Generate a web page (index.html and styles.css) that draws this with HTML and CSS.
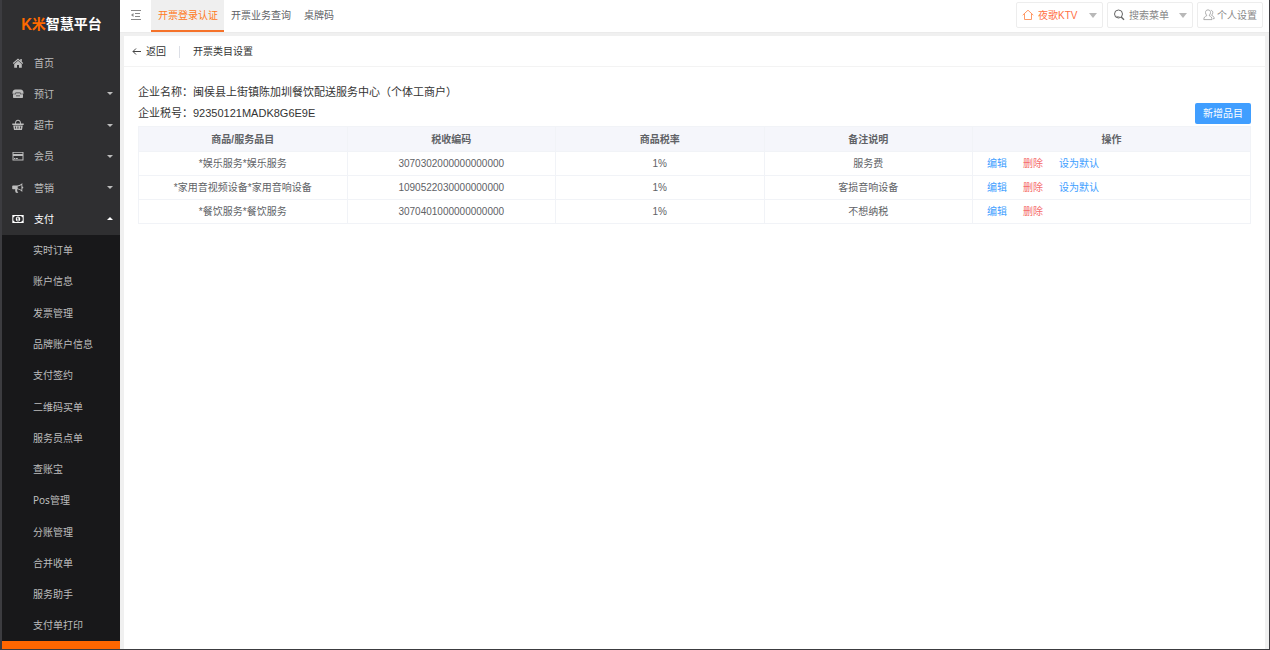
FILE: index.html
```html
<!DOCTYPE html>
<html lang="zh-CN">
<head>
<meta charset="utf-8">
<title>开票类目设置</title>
<link rel="stylesheet" href="styles.css">
</head>
<body>
<div class="app">
  <aside class="sidebar">
    <div class="logo"><span class="logo-k">K</span><span class="logo-mi">米</span><span class="logo-name">智慧平台</span></div>
    <nav class="nav">
      <ul class="menu">
        <li class="menu-item"><a class="menu-link" href="#"><svg class="menu-icon" viewBox="0 0 12 12"><path d="M6 1.500 8.300 3.500V2H9.800V4.800L11.200 6.100 10.600 6.900 6 3 1.400 6.900.8 6.100zM6 3.700 9.800 7v3.800H7V8H5v2.800H2.200V7z"/></svg>首页</a></li>
        <li class="menu-item"><a class="menu-link" href="#"><svg class="menu-icon" viewBox="0 0 12 12"><path fill-rule="evenodd" d="M3.500 1.500h5C10.500 1.500 11.500 3 11.500 5v.8h-3V4.500h-5v1.300h-3V5C.5 3 1.500 1.500 3.500 1.500zM4 5.300h4v1h3V9c0 .6-.4 1-1 1H2c-.6 0-1-.4-1-1V6.300h3zM4 7.500v.8h4v-.8z"/></svg>预订<span class="caret"></span></a></li>
        <li class="menu-item"><a class="menu-link" href="#"><svg class="menu-icon" viewBox="0 0 12 12"><path fill-rule="evenodd" d="M3 4.500C3 2 4.200.8 6 .8S9 2 9 4.500h2.700V6H.3V4.500zm1 0h4C8 2.600 7.300 1.700 6 1.700S4 2.600 4 4.500zM1.200 6.500h9.600L10 11H2zM3 7.500l.4 2.300h.7L3.900 7.500zm2.500 0v2.300h.9V7.500zm2.600 0-.2 2.300h.7L9 7.500z"/></svg>超市<span class="caret"></span></a></li>
        <li class="menu-item"><a class="menu-link" href="#"><svg class="menu-icon" viewBox="0 0 12 12"><path fill-rule="evenodd" d="M.5 2h11v8.500H.5zm1 .8V4h9V2.800zm0 3.200v3.600h9V6zM2 8h1.200v.9H2zm1.800 0h2v.9h-2z"/></svg>会员<span class="caret"></span></a></li>
        <li class="menu-item"><a class="menu-link" href="#"><svg class="menu-icon" viewBox="0 0 12 12"><path fill-rule="evenodd" d="M1 3.500h4C7 3.500 9 2.500 10.300 1v3.500a1 1 0 0 1 0 2V10C9 8.500 7 7.400 5.300 7.300c-.5.6-.3 1 .1 1.500-.2.7.2 1.200.9 1.700-.7.7-2 .6-2.600 0-.3-1-.8-2-.4-3.200H1c-.6 0-.8-.3-.8-.8V4.300c0-.5.3-.8.8-.8zm4.700.9v2c1.400.2 2.600.8 3.700 1.600V2.900C8.300 3.700 7 4.200 5.700 4.400z"/></svg>营销<span class="caret"></span></a></li>
        <li class="menu-item menu-item-open">
          <a class="menu-link menu-link-active" href="#"><svg class="menu-icon" viewBox="0 0 12 12"><path fill-rule="evenodd" d="M.3 2h11.400v8H.3zm2.300 1c0 .8-.5 1.300-1.300 1.300v3.400c.8 0 1.300.5 1.300 1.300h6.800c0-.8.5-1.300 1.300-1.300V4.300C9.900 4.300 9.400 3.800 9.400 3zM6 3.500c1.400 0 2.200 1.100 2.200 2.500S7.400 8.500 6 8.500 3.800 7.400 3.800 6 4.600 3.500 6 3.500zm-.4 1-.9.8.4.4.4-.3v1.500H5v.6h2v-.6h-.6V4.500z"/></svg>支付<span class="caret caret-up"></span></a>
          <ul class="submenu">
            <li><a href="#">实时订单</a></li>
            <li><a href="#">账户信息</a></li>
            <li><a href="#">发票管理</a></li>
            <li><a href="#">品牌账户信息</a></li>
            <li><a href="#">支付签约</a></li>
            <li><a href="#">二维码买单</a></li>
            <li><a href="#">服务员点单</a></li>
            <li><a href="#">查账宝</a></li>
            <li><a href="#">Pos管理</a></li>
            <li><a href="#">分账管理</a></li>
            <li><a href="#">合并收单</a></li>
            <li><a href="#">服务助手</a></li>
            <li><a href="#">支付单打印</a></li>
          </ul>
        </li>
      </ul>
    </nav>
    <div class="sidebar-foot"></div>
  </aside>

  <div class="page">
    <header class="topbar">
      <button class="fold" type="button" aria-label="收起菜单"><svg viewBox="0 0 12 12"><path d="M1 1.500h10M5 4.500h5M5 7.500h5M1 10.500h10" fill="none" stroke="#888"/><path d="M3.500 4v4L1 6z" fill="#888"/></svg></button>
      <nav class="tabs">
        <a class="tab tab-active" href="#">开票登录认证</a>
        <a class="tab" href="#">开票业务查询</a>
        <a class="tab" href="#">桌牌码</a>
      </nav>
      <div class="tools">
        <label class="picker picker-shop">
          <svg class="tool-icon" viewBox="0 0 12 12" fill="none" stroke="#ff9a66"><path d="M.7 6.200 6 1.200 11.300 6.200M2.500 5v5.500h7V5"/></svg>
          <select aria-label="门店"><option>夜歌KTV</option></select>
          <span class="picker-arrow"></span>
        </label>
        <label class="picker picker-search">
          <svg class="tool-icon" viewBox="0 0 12 12" fill="none" stroke="#666"><circle cx="5.500" cy="5" r="4"/><path d="M8.200 8 11 10.800" stroke-width="1.400"/><path d="M3.500 7.300c.8.600 1.800.8 2.800.4"/></svg>
          <select aria-label="搜索菜单"><option>搜索菜单</option></select>
          <span class="picker-arrow"></span>
        </label>
        <button class="profile" type="button"><svg class="tool-icon" viewBox="0 0 12 12" fill="none" stroke="#999" stroke-width=".8"><path d="M5 .9c1.600 0 2.500 1.100 2.500 2.600 0 1.200-.5 2-1.100 2.600v.8c1.600.5 2.600 1.300 2.600 3.700H.8c0-2.400 1.200-3.200 2.800-3.700v-.8C3 5.500 2.500 4.700 2.500 3.500 2.500 2 3.400.9 5 .9zM7.800 1.300c1.400.1 2 1.100 2 2.300 0 1-.4 1.800-1 2.300v.7c1.400.4 2.400 1.200 2.400 3.100H10"/></svg><span>个人设置</span></button>
      </div>
    </header>

    <main class="card">
      <div class="crumbs">
        <a class="back" href="#"><svg viewBox="0 0 10 10"><path d="M9 4.500H1M4 1.500 1 4.500l3 3" fill="none" stroke="#444"/></svg>返回</a>
        <h1 class="crumb-title">开票类目设置</h1>
      </div>
      <section class="content">
        <div class="company">
          <div class="company-info">
            <p>企业名称：闽侯县上街镇陈加圳餐饮配送服务中心（个体工商户）</p>
            <p>企业税号：92350121MADK8G6E9E</p>
          </div>
          <button class="add" type="button">新增品目</button>
        </div>
        <table class="items">
          <thead>
            <tr><th>商品/服务品目</th><th>税收编码</th><th>商品税率</th><th>备注说明</th><th class="col-actions">操作</th></tr>
          </thead>
          <tbody>
            <tr><td>*娱乐服务*娱乐服务</td><td>3070302000000000000</td><td>1%</td><td>服务费</td><td class="actions"><a href="#">编辑</a><a class="danger" href="#">删除</a><a href="#">设为默认</a></td></tr>
            <tr><td>*家用音视频设备*家用音响设备</td><td>1090522030000000000</td><td>1%</td><td>客损音响设备</td><td class="actions"><a href="#">编辑</a><a class="danger" href="#">删除</a><a href="#">设为默认</a></td></tr>
            <tr><td>*餐饮服务*餐饮服务</td><td>3070401000000000000</td><td>1%</td><td>不想纳税</td><td class="actions"><a href="#">编辑</a><a class="danger" href="#">删除</a></td></tr>
          </tbody>
        </table>
      </section>
    </main>
  </div>
</div>
</body>
</html>
```

FILE: styles.css
```css
* { box-sizing: border-box; }

body {
  margin: 0;
  font: 10px/16px "Liberation Sans", "Noto Sans CJK SC", sans-serif;
  color: #606266;
}

a { color: inherit; text-decoration: none; }
ul { list-style: none; margin: 0; padding: 0; }
p, h1 { margin: 0; }
button, select { font: inherit; color: inherit; background: none; border: 0; padding: 0; }
svg { display: block; flex: none; }

.app {
  display: flex;
  min-height: 100vh;
  border: solid #3c3c40;
  border-width: 0 1px 1px 2px;
}

/* Sidebar */
.sidebar {
  flex: 0 0 118px;
  display: flex;
  flex-direction: column;
  background: #2f2f31;
  color: #bdbdbd;
  font-family: "Noto Sans", "Noto Sans CJK SC", sans-serif;
}
.logo {
  display: flex;
  align-items: center;
  height: 47px;
  padding-left: 19px;
  font-weight: 500;
  font-size: 14px;
  color: #fff;
}
.logo-k { font: 500 17px/16px Roboto, sans-serif; color: #ff6a00; }
.logo-mi { font-weight: 700; color: #ff6a00; }
.logo-name { font-weight: 700; }
.nav, .menu { flex: 1; display: flex; flex-direction: column; }
.menu-item { flex: 1 0 31px; display: flex; }
.menu-item-open { flex: 14 0 434px; flex-direction: column; }
.menu-link {
  flex: 1;
  display: flex;
  align-items: center;
  gap: 10px;
  padding: 0 7px 0 10px;
}
.menu-link-active { color: #fff; }
.menu-icon { width: 12px; height: 12px; fill: currentColor; }
.caret {
  margin-left: auto;
  border: 3px solid transparent;
  border-top-color: currentColor;
  border-bottom: 0;
}
.caret-up { border-top: 0; border-bottom: 3px solid currentColor; }
.submenu {
  flex: 13;
  display: flex;
  flex-direction: column;
  background: #18181a;
}
.submenu li { flex: 1; display: flex; }
.submenu a { flex: 1; display: flex; align-items: center; padding-left: 31px; }
.sidebar-foot { height: 8px; background: #ff6600; }

/* Top bar */
.page {
  flex: 1;
  min-width: 0;
  display: flex;
  flex-direction: column;
  background: #f0f0f0;
}
.topbar {
  display: flex;
  height: 33px;
  background: #fff;
  border-bottom: 1px solid #ebebeb;
}
.fold { width: 31px; padding-bottom: 2px; display: flex; align-items: center; justify-content: center; }
.fold svg { width: 12px; height: 12px; }
.tabs { display: flex; }
.tab {
  display: flex;
  align-items: center;
  padding: 2px 6px 0 7px;
  border-bottom: 2px solid transparent;
}
.tab-active { color: #ff7a22; background: #efefef; border-bottom-color: #f5722a; }
.tools {
  display: flex;
  align-items: flex-start;
  gap: 4px;
  margin-left: auto;
  padding: 2px 6px 0 0;
  color: #888;
}
.picker, .profile {
  display: flex;
  align-items: center;
  height: 26px;
  padding: 0 5px;
  border: 1px solid #ededed;
  border-radius: 2px;
}
.picker { gap: 4px; }
.picker-shop { width: 87px; color: #ff7043; }
.picker-search { width: 86px; }
.picker select { flex: 1; min-width: 0; padding-top: 2px; appearance: none; outline: 0; }
.picker-arrow {
  border: 4px solid transparent;
  border-top: 5px solid #b8b8b8;
  border-bottom: 0;
}
.profile { gap: 2px; }
.profile span { padding-top: 2px; }
.tool-icon { width: 12px; height: 12px; }

/* Content card */
.card {
  flex: 1;
  margin: 3px 4px 0;
  background: #fff;
}
.crumbs {
  display: flex;
  align-items: center;
  height: 31px;
  padding: 1px 0 0 8px;
  border-bottom: 1px solid #f3f3f3;
  color: #333;
}
.back { display: flex; align-items: center; gap: 4px; }
.back svg { width: 10px; height: 10px; }
.crumb-title {
  margin-left: 13px;
  padding-left: 13px;
  border-left: 1px solid #dcdfe6;
  font-size: 10px;
  line-height: 12px;
  font-weight: 400;
}
.content { padding: 15px 14px 0; }
.company {
  display: flex;
  justify-content: space-between;
  align-items: flex-end;
  padding-bottom: 2px;
}
.company-info { font-size: 11px; line-height: 21px; color: #333; }
.add {
  height: 21px;
  padding: 0 8px;
  border-radius: 2px;
  background: #409eff;
  color: #fff;
}

.items {
  width: 100%;
  table-layout: fixed;
  border-collapse: collapse;
  border: 1px solid #f1f3f7;
  text-align: center;
}
.items th, .items td { height: 24px; padding: 0; border: 1px solid #f1f3f7; }
.items th { height: 25px; padding-top: 1px; background: #f5f6fb; font-weight: 700; }
.items .col-actions { width: 25%; }
.items .actions { padding-left: 14px; text-align: left; color: #409eff; }
.actions a { margin-right: 16px; }
.actions .danger { color: #f56c6c; }
```
